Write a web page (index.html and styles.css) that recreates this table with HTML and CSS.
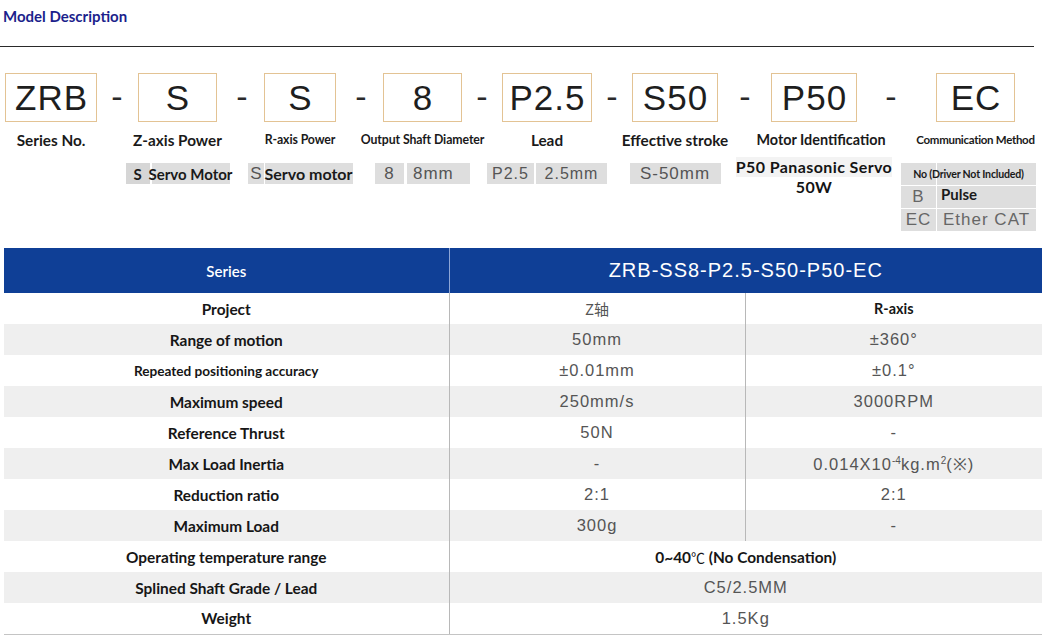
FILE: index.html
```html
<!DOCTYPE html>
<html lang="en">
<head>
<meta charset="utf-8">
<title>Model Description</title>
<link rel="stylesheet" href="styles.css">
</head>
<body>
<div class="page">
  <h1 class="title">Model Description</h1>
  <div class="rule"></div>

  <div class="model">
    <div class="seg s1">
      <div class="box b1">ZRB</div>
      <div class="label">Series No.</div>
    </div>
    <div class="dash d1">-</div>
    <div class="seg s2">
      <div class="box b2">S</div>
      <div class="label">Z-axis Power</div>
      <div class="chips">
        <div class="chip c-z1 bold">S</div>
        <div class="chip c-z2 bold">Servo Motor</div>
      </div>
    </div>
    <div class="dash d2">-</div>
    <div class="seg s3">
      <div class="box b3">S</div>
      <div class="label small">R-axis Power</div>
      <div class="chips tight">
        <div class="chip c-r1 thin">S</div>
        <div class="chip c-r2 bold">Servo motor</div>
      </div>
    </div>
    <div class="dash d3">-</div>
    <div class="seg s4">
      <div class="box b4">8</div>
      <div class="label small">Output Shaft Diameter</div>
      <div class="chips wide">
        <div class="chip c-o1 thin">8</div>
        <div class="chip c-o2 thin">8mm</div>
      </div>
    </div>
    <div class="dash d4">-</div>
    <div class="seg s5">
      <div class="box b5">P2.5</div>
      <div class="label">Lead</div>
      <div class="chips">
        <div class="chip c-l1 thin">P2.5</div>
        <div class="chip c-l2 thin">2.5mm</div>
      </div>
    </div>
    <div class="dash d5">-</div>
    <div class="seg s6">
      <div class="box b6">S50</div>
      <div class="label">Effective stroke</div>
      <div class="chips">
        <div class="chip c-e1 thin">S-50mm</div>
      </div>
    </div>
    <div class="dash d6">-</div>
    <div class="seg s7">
      <div class="box b7">P50</div>
      <div class="label motor-label">Motor Identification</div>
      <div class="motor">
        <div class="motor-line motor-top">P50 Panasonic Servo</div>
        <div class="motor-line">50W</div>
      </div>
    </div>
    <div class="dash d7">-</div>
    <div class="seg s8">
      <div class="box b8">EC</div>
      <div class="label small cond">Communication Method</div>
      <div class="comm">
        <div class="comm-cell comm-wide">No (Driver Not Included)</div>
        <div class="comm-cell thin">B</div>
        <div class="comm-cell comm-pulse">Pulse</div>
        <div class="comm-cell thin">EC</div>
        <div class="comm-cell thin comm-left">Ether CAT</div>
      </div>
    </div>
  </div>

  <table class="spec">
    <colgroup>
      <col class="col-a">
      <col class="col-b">
      <col class="col-c">
    </colgroup>
    <thead>
      <tr>
        <th class="h-series">Series</th>
        <th class="h-model" colspan="2">ZRB-SS8-P2.5-S50-P50-EC</th>
      </tr>
    </thead>
    <tbody>
      <tr>
        <td class="lab">Project</td>
        <td class="val split cjk">Z轴</td>
        <td class="val raxis">R-axis</td>
      </tr>
      <tr class="alt">
        <td class="lab">Range of motion</td>
        <td class="val split">50mm</td>
        <td class="val">±360°</td>
      </tr>
      <tr>
        <td class="lab lab-small">Repeated positioning accuracy</td>
        <td class="val split">±0.01mm</td>
        <td class="val">±0.1°</td>
      </tr>
      <tr class="alt">
        <td class="lab">Maximum speed</td>
        <td class="val split">250mm/s</td>
        <td class="val">3000RPM</td>
      </tr>
      <tr>
        <td class="lab">Reference Thrust</td>
        <td class="val split">50N</td>
        <td class="val">-</td>
      </tr>
      <tr class="alt">
        <td class="lab">Max Load Inertia</td>
        <td class="val split">-</td>
        <td class="val">0.014X10<sup>-4</sup>kg.m<sup>2</sup>(※)</td>
      </tr>
      <tr>
        <td class="lab">Reduction ratio</td>
        <td class="val split">2:1</td>
        <td class="val">2:1</td>
      </tr>
      <tr class="alt">
        <td class="lab">Maximum Load</td>
        <td class="val split">300g</td>
        <td class="val">-</td>
      </tr>
      <tr>
        <td class="lab">Operating temperature range</td>
        <td class="val temp" colspan="2">0~40<span class="deg">℃</span> (No Condensation)</td>
      </tr>
      <tr class="alt">
        <td class="lab">Splined Shaft Grade / Lead</td>
        <td class="val" colspan="2">C5/2.5MM</td>
      </tr>
      <tr class="last">
        <td class="lab">Weight</td>
        <td class="val" colspan="2">1.5Kg</td>
      </tr>
    </tbody>
  </table>
</div>
</body>
</html>
```

FILE: styles.css
```css
* { box-sizing: border-box; }

html, body {
  margin: 0;
  padding: 0;
  background: #ffffff;
}

body {
  font-family: "Lato", "Noto Sans", "Liberation Sans", sans-serif;
  color: #1a1a1a;
  width: 1048px;
  height: 644px;
  overflow: hidden;
}

.title {
  margin: 0;
  padding: 6px 0 0 3px;
  font-size: 15px;
  line-height: 20px;
  font-weight: 700;
  color: #1c1f8c;
}

.rule {
  margin-top: 20px;
  width: 1034px;
  height: 0;
  border-top: 1px solid #2a2a2a;
}

/* ---------- model code row ---------- */
.model {
  display: flex;
  align-items: flex-start;
  margin-top: 26px;
  height: 158px;
}

.seg {
  flex: none;
  display: flex;
  flex-direction: column;
  align-items: center;
}

.s1 { width: 102px; }
.s2 { width: 91px; }
.s3 { width: 78px; }
.s4 { width: 79px; }
.s5 { width: 90px; }
.s6 { width: 86px; }
.s7 { width: 84px; }
.s8 { width: 99px; }

.dash {
  flex: none;
  height: 49px;
  display: flex;
  align-items: center;
  justify-content: center;
  font-family: "Liberation Sans", sans-serif;
  font-size: 34px;
  color: #2a2a2a;
  padding-bottom: 2px;
}
.d1 { width: 30px; }
.d2 { width: 38px; }
.d3 { width: 44px; }
.d4 { width: 40px; }
.d5 { width: 40px; }
.d6 { width: 54px; }
.d7 { width: 70px; }

.box {
  flex: none;
  height: 49px;
  border: 1px solid #e3c394;
  display: flex;
  align-items: center;
  justify-content: center;
  font-family: "Liberation Sans", sans-serif;
  font-size: 35px;
  letter-spacing: 1px;
  line-height: 1;
  color: #1e1e1e;
  padding-left: 1px;
}
.b1 { width: 92px; }
.b2 { width: 79px; }
.b3 { width: 72px; }
.b4 { width: 79px; }
.b5 { width: 90px; }
.b6 { width: 86px; }
.b7 { width: 86px; }
.b8 { width: 79px; }

.label {
  margin-top: 9px;
  height: 18px;
  line-height: 18px;
  white-space: nowrap;
  font-size: 15.3px;
  font-weight: 700;
  color: #1a1a1a;
}
.label.small {
  font-size: 12.3px;
  letter-spacing: -0.1px;
}
.label.cond {
  font-size: 11.5px;
  letter-spacing: -0.3px;
}
.label.motor-label {
  font-size: 14.4px;
  margin-left: 14px;
}

.chips {
  margin-top: 14px;
  display: flex;
  gap: 2px;
  white-space: nowrap;
}
.chips.tight { gap: 1px; }
.chips.wide { gap: 3px; }

.chip {
  height: 21px;
  background: #dedede;
  display: flex;
  align-items: center;
  justify-content: center;
  color: #555;
}
.chip.bold {
  font-family: "Lato", sans-serif;
  font-weight: 700;
  font-size: 15px;
  color: #1a1a1a;
}
.thin {
  font-family: "Liberation Sans", sans-serif;
  font-size: 17px;
  letter-spacing: 1px;
  color: #555;
}

.c-z1 { width: 24px; background: #d6d6d6; }
.c-z2 { width: 78px; }
.c-r1 { width: 16px; padding-left: 2px; }
.c-r2 { width: 88px; justify-content: flex-start; }
.chip.c-r2 { font-size: 16px; }
.c-o1 { width: 29px; }
.c-o2 { width: 63px; justify-content: flex-start; padding-left: 6px; }
.c-l1 { width: 47px; font-size: 16px; }
.c-l2 { width: 71px; font-size: 16px; }
.c-e1 { width: 91px; }

.motor {
  margin-top: 8px;
  display: flex;
  flex-direction: column;
  align-items: center;
  white-space: nowrap;
  font-size: 16px;
  letter-spacing: 0.4px;
  font-weight: 700;
  color: #141414;
}
.motor-line {
  height: 19.5px;
  line-height: 19.5px;
}
.motor-top {
  background: #f3f3f3;
}

.comm {
  margin-top: 14px;
  margin-right: 14px;
  display: grid;
  grid-template-columns: 35px 99px;
  grid-auto-rows: 22px;
  gap: 1px;
}
.comm-cell {
  background: #dedede;
  display: flex;
  align-items: center;
  justify-content: center;
  white-space: nowrap;
}
.comm-cell.thin {
  color: #666;
}
.comm-wide {
  grid-column: 1 / span 2;
  background: linear-gradient(to right, #dedede 35px, #ffffff 35px, #ffffff 36px, #dedede 36px);
  font-size: 10.6px;
  font-weight: 700;
  color: #1a1a1a;
  letter-spacing: -0.2px;
}
.comm-pulse {
  justify-content: flex-start;
  align-items: flex-start;
  padding-left: 4px;
  font-size: 15px;
  font-weight: 700;
  color: #1a1a1a;
  line-height: 16px;
}
.comm-left {
  justify-content: flex-start;
  padding-left: 6px;
}

/* ---------- spec table ---------- */
.spec {
  margin: 17px 0 0 4px;
  width: 1038px;
  border-collapse: collapse;
  table-layout: fixed;
}
.col-a { width: 445px; }
.col-b { width: 296px; }
.col-c { width: 297px; }

.spec th {
  height: 45px;
  padding: 0;
  background: #0f3f96;
  color: #ffffff;
  text-align: center;
  vertical-align: middle;
}
.h-series {
  font-family: "Lato", sans-serif;
  font-size: 15px;
  font-weight: 600;
  border-right: 1px solid #8ea6d6;
}
.h-model {
  font-family: "Liberation Sans", sans-serif;
  font-size: 20px;
  font-weight: 400;
  letter-spacing: 1px;
}

.spec td {
  height: 31px;
  padding: 0;
  text-align: center;
  vertical-align: middle;
  white-space: nowrap;
}
.spec tr.alt td { background: #efefef; }
.spec tr.last td { border-bottom: 1px solid #c4c4c4; }

.lab {
  font-family: "Lato", sans-serif;
  font-size: 15.4px;
  font-weight: 700;
  color: #161616;
  border-right: 1px solid #b8b8b8;
}
.lab-small { font-size: 13.6px; }

.val {
  font-family: "Liberation Sans", sans-serif;
  font-size: 16.5px;
  letter-spacing: 1px;
  color: #555555;
}
.val.split { border-right: 1px solid #b8b8b8; }
.val.cjk {
  font-family: "Noto Sans CJK SC", sans-serif;
  font-size: 15px;
  letter-spacing: 0;
  color: #555;
}
.val.raxis {
  font-family: "Lato", sans-serif;
  font-size: 14.4px;
  font-weight: 700;
  letter-spacing: 0;
  color: #161616;
}
.val sup {
  font-size: 10px;
  line-height: 0;
  letter-spacing: 0;
}
.val.temp {
  font-family: "Lato", sans-serif;
  font-size: 15.4px;
  font-weight: 700;
  letter-spacing: 0;
  color: #161616;
}
.deg {
  font-family: "Noto Sans CJK SC", sans-serif;
  font-weight: 400;
  font-size: 14px;
}
```
